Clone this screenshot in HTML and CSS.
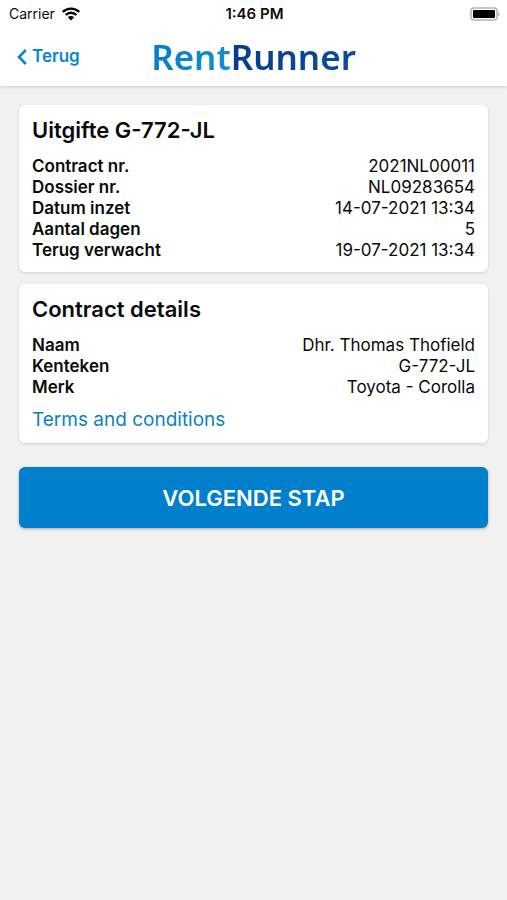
FILE: index.html
```html
<!DOCTYPE html>
<html lang="nl">
<head>
    <meta charset="UTF-8">
    <meta name="viewport" content="width=device-width, initial-scale=1.0">
    <title>RentRunner</title>
    <link rel="stylesheet" href="styles.css">
</head>
<body>
    <header>
        <div class="status-bar">
            <div class="carrier">
                <span>Carrier</span>
                <svg class="wifi" viewBox="0 0 18 14" aria-hidden="true">
                    <path d="M0.8 5 A11.6 11.6 0 0 1 17.2 5" />
                    <path d="M3.7 8 A7.5 7.5 0 0 1 14.3 8" />
                    <path class="dot" d="M5.8 10.3 A4.5 4.5 0 0 1 12.2 10.3 L9 13.6 Z" />
                </svg>
            </div>
            <div class="time">1:46 PM</div>
            <svg class="battery" viewBox="0 0 30 14" aria-hidden="true">
                <rect class="case" x="1" y="1" width="26" height="12" rx="3" />
                <rect x="3" y="3" width="22" height="8" rx="1" />
                <path class="tip" d="M28 4.5 Q31 7 28 9.5 Z" />
            </svg>
        </div>
        <nav>
            <a href="#" class="back">
                <svg viewBox="0 0 10 16" aria-hidden="true">
                    <path d="M8.8 1 L2 8 L8.8 15" />
                </svg>
                <span>Terug</span>
            </a>
            <div class="logo"><span class="rent">Rent</span><span class="runner">Runner</span></div>
        </nav>
    </header>

    <main>
        <section class="card">
            <h2>Uitgifte G-772-JL</h2>
            <dl>
                <div class="row"><dt>Contract nr.</dt><dd>2021NL00011</dd></div>
                <div class="row"><dt>Dossier nr.</dt><dd>NL09283654</dd></div>
                <div class="row"><dt>Datum inzet</dt><dd>14-07-2021 13:34</dd></div>
                <div class="row"><dt>Aantal dagen</dt><dd>5</dd></div>
                <div class="row"><dt>Terug verwacht</dt><dd>19-07-2021 13:34</dd></div>
            </dl>
        </section>

        <section class="card">
            <h2>Contract details</h2>
            <dl>
                <div class="row"><dt>Naam</dt><dd>Dhr. Thomas Thofield</dd></div>
                <div class="row"><dt>Kenteken</dt><dd>G-772-JL</dd></div>
                <div class="row"><dt>Merk</dt><dd>Toyota - Corolla</dd></div>
            </dl>
            <a href="#" class="terms">Terms and conditions</a>
        </section>

        <button type="button" class="btn">VOLGENDE STAP</button>
    </main>
</body>
</html>
```

FILE: styles.css
```css
* {
    margin: 0;
    padding: 0;
    box-sizing: border-box;
}

body {
    font-family: "Inter", sans-serif;
    background: #f1f1f1;
    color: #0a0a0a;
    font-size: 17px;
    line-height: 21px;
}

header {
    background: #ffffff;
    box-shadow: 0 1px 3px rgba(0, 0, 0, 0.15);
}

.status-bar {
    display: grid;
    grid-template-columns: 1fr auto 1fr;
    align-items: center;
    height: 27px;
    padding: 0 7px 0 9px;
    font-size: 14px;
}

.carrier {
    display: flex;
    align-items: center;
    gap: 7px;
}

.wifi {
    width: 18px;
    height: 14px;
    fill: none;
    stroke: #000000;
    stroke-width: 2.4;
}

.wifi .dot {
    fill: #000000;
    stroke: none;
}

.time {
    font-size: 15px;
    font-weight: 600;
}

.battery {
    width: 30px;
    height: 14px;
    justify-self: end;
}

.battery .case {
    fill: none;
    stroke: #b4b4b4;
    stroke-width: 1.5;
}

.battery .tip {
    fill: #b4b4b4;
}

nav {
    display: grid;
    grid-template-columns: 1fr auto 1fr;
    align-items: center;
    height: 59px;
    padding: 0 17px;
}

.back {
    display: flex;
    align-items: center;
    gap: 5px;
    color: #0c86cc;
    font-weight: 600;
    text-decoration: none;
}

.back svg {
    width: 10px;
    height: 16px;
    fill: none;
    stroke: #0c86cc;
    stroke-width: 2.6;
}

.logo {
    font-family: "Noto Sans", sans-serif;
    font-size: 35px;
    font-weight: 600;
    line-height: 40px;
}

.logo span {
    background-clip: text;
    -webkit-background-clip: text;
    color: transparent;
}

.rent {
    background-image: linear-gradient(to right, #0a7cc8, #1090d2);
}

.runner {
    background-image: linear-gradient(to right, #083c8c, #0a4ca0);
}

main {
    display: flex;
    flex-direction: column;
    gap: 12px;
    padding: 19px;
}

.card {
    padding: 12px 13px 11px;
    background: #ffffff;
    border-radius: 6px;
    box-shadow: 0 1px 3px rgba(0, 0, 0, 0.15);
}

.card h2 {
    margin-bottom: 13px;
    font-size: 22px;
    font-weight: 600;
    line-height: 26px;
}

.row {
    display: flex;
    justify-content: space-between;
}

dt {
    font-weight: 600;
}

.terms {
    display: block;
    margin-top: 10px;
    color: #0c7fc2;
    font-size: 19px;
    line-height: 24px;
    text-decoration: none;
}

.btn {
    height: 61px;
    margin-top: 12px;
    border: none;
    border-radius: 6px;
    background: #0080cc;
    box-shadow: 0 1px 3px rgba(0, 0, 0, 0.3);
    color: #ffffff;
    font-family: inherit;
    font-size: 22px;
    font-weight: 600;
    cursor: pointer;
}
```
